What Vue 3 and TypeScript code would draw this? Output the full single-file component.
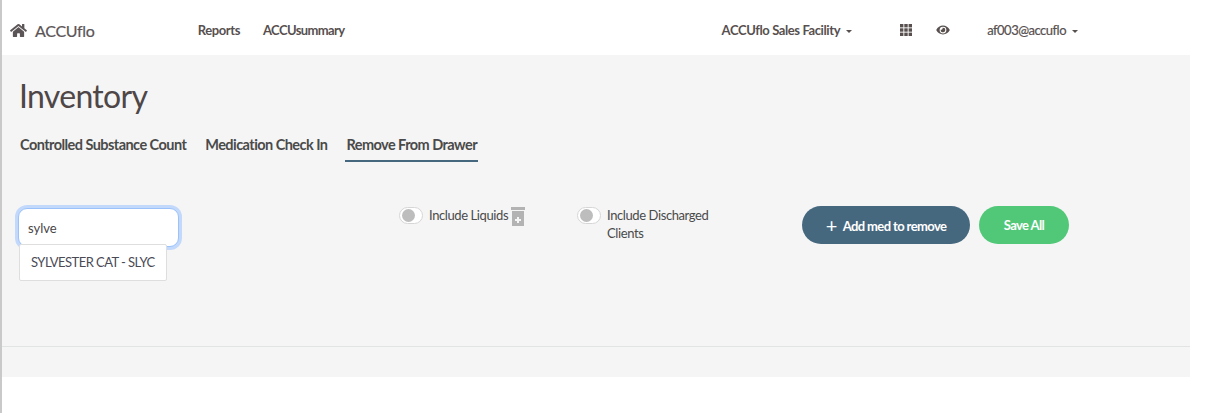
<template>
  <div class="page">
    <nav class="topbar">
      <a class="brand">
        <svg class="home-icon" viewBox="0 0 576 512" fill="currentColor">
          <path d="M280.4 148.3 96 300.1V464a16 16 0 0 0 16 16l112-.3a16 16 0 0 0 15.9-16V368a16 16 0 0 1 16-16h64a16 16 0 0 1 16 16v95.6a16 16 0 0 0 16 16l112 .3a16 16 0 0 0 16-16V300L295.700 148.300a12.200 12.200 0 0 0-15.300 0zM571.600 251.500 488 182.600V44.100a12 12 0 0 0-12-12h-56a12 12 0 0 0-12 12v72.600L318.500 43a48 48 0 0 0-61 0L4.300 251.500a12 12 0 0 0-1.600 16.900l25.500 31A12 12 0 0 0 45.200 301l235.200-193.700a12.200 12.200 0 0 1 15.300 0L530.900 301a12 12 0 0 0 16.900-1.600l25.500-31a12 12 0 0 0-1.700-16.900z" />
        </svg>
        <span>ACCUflo</span>
      </a>
      <a class="nav-link reports">Reports</a>
      <a class="nav-link summary">ACCUsummary</a>
      <a class="nav-link facility caret">ACCUflo Sales Facility</a>
      <svg class="grid-icon" viewBox="0 0 12 12" fill="currentColor">
        <rect v-for="cell in gridCells" :key="cell.id" :x="cell.x" :y="cell.y" width="3.4" height="3.4" />
      </svg>
      <svg class="eye-icon" viewBox="0 0 576 512" fill="currentColor">
        <path d="M572.500 241.400C518.300 135.600 410.900 64 288 64S57.700 135.600 3.500 241.400a32.400 32.400 0 0 0 0 29.200C57.700 376.400 165.100 448 288 448s230.300-71.600 284.500-177.400a32.400 32.400 0 0 0 0-29.200zM288 400a144 144 0 1 1 144-144 143.900 143.900 0 0 1-144 144zm0-240a95.300 95.300 0 0 0-25.300 3.800 47.900 47.900 0 0 1-66.900 66.900A95.800 95.800 0 1 0 288 160z" />
      </svg>
      <a class="nav-link user caret">af003@accuflo</a>
    </nav>

    <main class="content">
      <h1 class="title">Inventory</h1>

      <div class="tabs">
        <a v-for="tab in tabs" :key="tab" class="tab" :class="{ active: tab === activeTab }">{{ tab }}</a>
      </div>

      <div class="toolbar">
        <div class="search">
          <input v-model="query" class="search-input" type="text" />
          <div class="results">
            <div class="result">SYLVESTER CAT - SLYC</div>
          </div>
        </div>

        <div class="toggle-group liquids">
          <span class="toggle"><span class="knob"></span></span>
          <span class="toggle-label">Include Liquids</span>
          <svg class="bottle-icon" viewBox="0 0 14 19">
            <rect x="0" y="0" width="14" height="3" fill="#b3b3b3" />
            <rect x="1" y="4" width="12" height="15" fill="#b3b3b3" />
            <path d="M6 10h2v2h2v2H8v2H6v-2H4v-2h2z" fill="#f5f5f5" />
          </svg>
        </div>

        <div class="toggle-group discharged">
          <span class="toggle"><span class="knob"></span></span>
          <span class="toggle-label">Include Discharged Clients</span>
        </div>

        <button class="btn btn-add" type="button"><span class="plus">+</span>Add med to remove</button>
        <button class="btn btn-save" type="button">Save All</button>
      </div>

      <div class="divider"></div>
    </main>
  </div>
</template>

<script setup lang="ts">
import { ref } from 'vue'

const tabs = ['Controlled Substance Count', 'Medication Check In', 'Remove From Drawer']
const activeTab = ref('Remove From Drawer')
const query = ref('sylve')

const gridCells = Array.from({ length: 9 }, (_, i) => ({
  id: i,
  x: (i % 3) * 4.3,
  y: Math.floor(i / 3) * 4.3
}))
</script>

<style>
html,
body {
  background: #fff;
  overflow: hidden;
}
</style>

<style scoped>
.page {
  width: 1190px;
  height: 413px;
  border-left: 2px solid #c9c9c9;
  box-sizing: border-box;
  font-family: Lato, "Open Sans", sans-serif;
  color: #4a4647;
}

.topbar {
  display: flex;
  align-items: center;
  height: 55px;
  padding: 5px 0 0 8px;
  box-sizing: border-box;
  background: #fff;
  font-size: 13px;
  font-weight: 700;
  letter-spacing: -0.4px;
  color: #57504f;
}

.brand {
  display: flex;
  align-items: center;
  font-size: 16px;
  font-weight: 400;
  letter-spacing: -0.3px;
  color: #5c5557;
  -webkit-text-stroke: 0.2px #5c5557;
}

.home-icon {
  width: 17px;
  height: 15px;
  margin-right: 8px;
}

.nav-link {
  white-space: nowrap;
}

.reports {
  margin-left: 103px;
}

.summary {
  margin-left: 23px;
  letter-spacing: -0.6px;
}

.facility {
  margin-left: 377px;
}

.caret::after {
  content: "";
  display: inline-block;
  margin-left: 6px;
  vertical-align: 2px;
  border-top: 3.500px solid #57504f;
  border-left: 3.500px solid transparent;
  border-right: 3.500px solid transparent;
}

.grid-icon {
  width: 12px;
  height: 12px;
  margin-left: 48px;
}

.eye-icon {
  width: 14px;
  height: 12px;
  margin-left: 24px;
}

.user {
  margin-left: 37px;
  font-weight: 400;
  letter-spacing: -0.5px;
  -webkit-text-stroke: 0.2px #57504f;
}

.content {
  height: 322px;
  padding: 22px 0 0;
  box-sizing: border-box;
  background: #f5f5f5;
}

.title {
  margin: 0 0 0 17px;
  font-size: 32px;
  font-weight: 400;
  line-height: 38px;
  letter-spacing: -0.7px;
  color: #4e4647;
}

.tabs {
  display: flex;
  gap: 17px;
  margin: 21px 0 0 17px;
}

.tab {
  padding: 0 1px 6px;
  font-size: 14.500px;
  font-weight: 700;
  line-height: 18px;
  color: #4a4a4a;
  letter-spacing: -0.55px;
}

.tab.active {
  border-bottom: 2px solid #46687f;
}

.toolbar {
  display: flex;
  align-items: flex-start;
  margin: 44px 0 0 16px;
  height: 140px;
}

.search {
  position: relative;
  width: 161px;
  margin-top: 2px;
}

.search-input {
  display: block;
  width: 100%;
  height: 39px;
  padding: 0 9px;
  box-sizing: border-box;
  border: 1px solid #9cc2fb;
  border-radius: 9px;
  outline: none;
  box-shadow: 0 0 0 3px #c3d9fb;
  background: #fff;
  font-family: inherit;
  font-size: 13px;
  color: #4a4647;
}

.results {
  position: absolute;
  top: 36px;
  left: 1px;
  width: 148px;
  background: #fff;
  border: 1px solid #dedede;
  border-radius: 2px;
  box-sizing: border-box;
}

.result {
  padding: 10px 11px;
  font-size: 13px;
  line-height: 15px;
  letter-spacing: -0.55px;
  white-space: nowrap;
  color: #4a4a55;
}

.toggle-group {
  display: flex;
  align-items: flex-start;
  font-size: 13px;
  line-height: 18px;
  letter-spacing: -0.4px;
  color: #4a4a4a;
}

.liquids {
  margin-left: 220px;
  width: 178px;
}

.discharged {
  width: 225px;
}

.toggle {
  display: inline-flex;
  align-items: center;
  flex: none;
  width: 24px;
  height: 17px;
  margin-top: 1px;
  padding-left: 2px;
  box-sizing: border-box;
  border: 1px solid #d6d6d6;
  border-radius: 9px;
  background: #fff;
}

.knob {
  width: 13px;
  height: 13px;
  border-radius: 50%;
  background: #bdbdbd;
}

.toggle-label {
  margin-left: 6px;
  white-space: normal;
}

.discharged .toggle-label {
  width: 110px;
}

.bottle-icon {
  width: 14px;
  height: 19px;
  margin-left: 3px;
  margin-top: 1px;
}

.btn {
  height: 38px;
  border: none;
  border-radius: 19px;
  font-family: inherit;
  font-size: 13px;
  font-weight: 700;
  letter-spacing: -0.6px;
  color: #fff;
  padding: 0;
  white-space: nowrap;
}

.btn-add {
  width: 168px;
  background: #46687f;
}

.plus {
  margin-right: 6px;
  font-size: 20px;
  font-weight: 400;
  line-height: 1;
  vertical-align: -2px;
}

.btn-save {
  width: 90px;
  margin-left: 9px;
  background: #50c878;
}

.divider {
  height: 1px;
  background: #e1e4e3;
}
</style>
